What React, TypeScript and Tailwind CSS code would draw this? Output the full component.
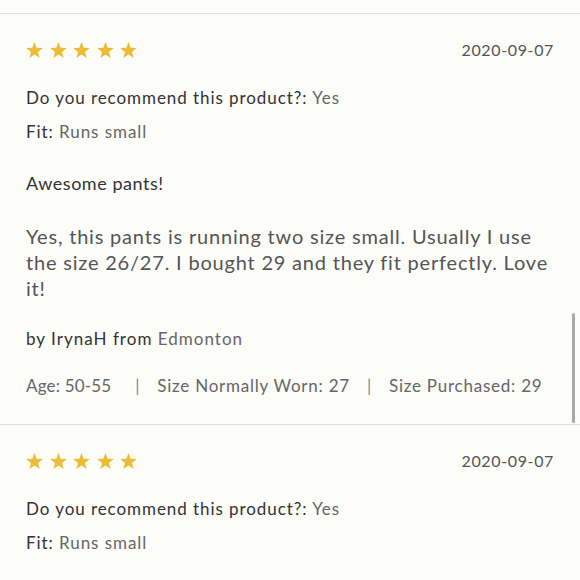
const font = { fontFamily: '"Lato", "Liberation Sans", sans-serif' }

function Stars() {
  return (
    <div className="flex items-center gap-[6.5px]">
      {[0, 1, 2, 3, 4].map((i) => (
        <svg key={i} width="17" height="16" viewBox="0 0 24 23">
          <polygon
            points="12,0 15.1,8.4 24,8.8 17,14.3 19.4,23 12,18 4.6,23 7,14.3 0,8.8 8.9,8.4"
            fill="#ecbc37"
          />
        </svg>
      ))}
    </div>
  )
}

interface ReviewProps {
  date: string
  full?: boolean
}

function Review({ date, full }: ReviewProps) {
  return (
    <div className="border-t border-[#dededb] px-[26px] pt-[26px] pb-[28px]">
      <div className="flex h-[20px] items-center justify-between">
        <Stars />
        <span className="text-[16px] leading-[20px] tracking-[0.04em] text-[#555]">{date}</span>
      </div>
      <p className="mt-[28px] text-[17px] leading-[20px] tracking-[0.055em] text-[#333]">
        Do you recommend this product?: <span className="text-[#666]">Yes</span>
      </p>
      <p className="mt-[14px] text-[17px] leading-[20px] tracking-[0.055em] text-[#333]">
        Fit: <span className="text-[#666]">Runs small</span>
      </p>
      {full && (
        <>
          <h3 className="mt-[29px] text-[18px] leading-[24px] tracking-[0.03em] text-[#333]">Awesome pants!</h3>
          <p className="mt-[28px] text-[20px] leading-[26px] tracking-[0.04em] text-[#555]">
            Yes, this pants is running two size small. Usually I use
            <br />
            the size 26/27. I bought 29 and they fit perfectly. Love
            <br />
            it!
          </p>
          <p className="mt-[28px] text-[17px] leading-[20px] tracking-[0.06em] text-[#333]">
            by IrynaH from <span className="text-[#666]">Edmonton</span>
          </p>
          <p className="mt-[27px] flex items-center whitespace-nowrap text-[17px] leading-[20px] tracking-[0.045em] text-[#666]">
            <span className="shrink-0 tracking-[0.01em]">Age: 50-55</span>
            <span className="ml-[24px] mr-[17px] shrink-0 text-[#888]">|</span>
            <span className="shrink-0">Size Normally Worn: 27</span>
            <span className="mx-[17px] shrink-0 text-[#888]">|</span>
            <span className="shrink-0">Size Purchased: 29</span>
          </p>
        </>
      )}
    </div>
  )
}

export default function App() {
  return (
    <div className="relative h-[580px] w-[580px] overflow-hidden bg-[#fcfcf9] pt-[13px]" style={font}>
      <Review date="2020-09-07" full />
      <Review date="2020-09-07" />
      <div className="absolute right-[5px] top-[313px] h-[110px] w-[3px] rounded-full bg-[#a9a9a7]" />
    </div>
  )
}
